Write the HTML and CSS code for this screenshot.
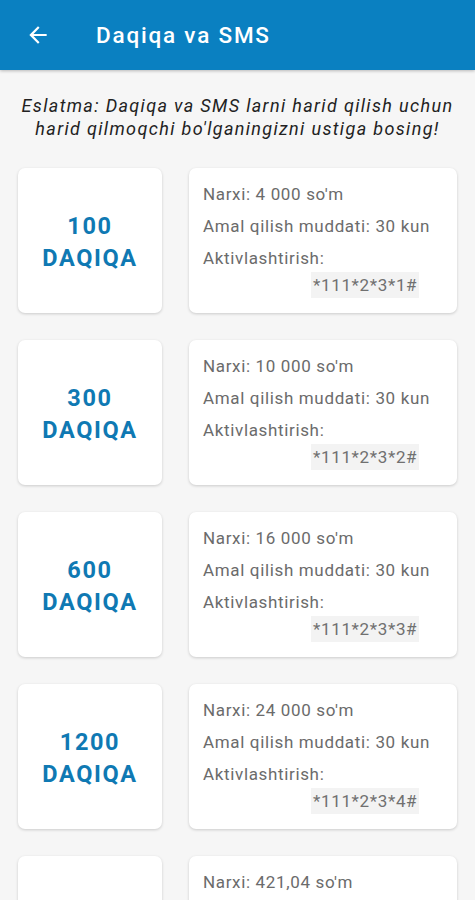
FILE: index.html
```html
<!DOCTYPE html>
<html lang="uz">
<head>
	<meta charset="UTF-8">
	<title>Daqiqa va SMS</title>
	<link rel="stylesheet" href="styles.css">
</head>
<body>
	<div class="topbar">
		<svg class="back" width="24" height="24" viewBox="0 0 24 24"><path d="M20 11H7.83l5.59-5.59L12 4l-8 8 8 8 1.41-1.41L7.83 13H20v-2z" fill="#fff"/></svg>
		<div class="title">Daqiqa va SMS</div>
	</div>

	<p class="note">Eslatma: Daqiqa va SMS larni harid qilish uchun harid qilmoqchi bo'lganingizni ustiga bosing!</p>

	<div class="list">
		<div class="row">
			<div class="card amount">100<br>DAQIQA</div>
			<div class="card info">
				<div class="line">Narxi: 4 000 so'm</div>
				<div class="line">Amal qilish muddati: 30 kun</div>
				<div class="line">Aktivlashtirish:</div>
				<div class="code">*111*2*3*1#</div>
			</div>
		</div>
		<div class="row">
			<div class="card amount">300<br>DAQIQA</div>
			<div class="card info">
				<div class="line">Narxi: 10 000 so'm</div>
				<div class="line">Amal qilish muddati: 30 kun</div>
				<div class="line">Aktivlashtirish:</div>
				<div class="code">*111*2*3*2#</div>
			</div>
		</div>
		<div class="row">
			<div class="card amount">600<br>DAQIQA</div>
			<div class="card info">
				<div class="line">Narxi: 16 000 so'm</div>
				<div class="line">Amal qilish muddati: 30 kun</div>
				<div class="line">Aktivlashtirish:</div>
				<div class="code">*111*2*3*3#</div>
			</div>
		</div>
		<div class="row">
			<div class="card amount">1200<br>DAQIQA</div>
			<div class="card info">
				<div class="line">Narxi: 24 000 so'm</div>
				<div class="line">Amal qilish muddati: 30 kun</div>
				<div class="line">Aktivlashtirish:</div>
				<div class="code">*111*2*3*4#</div>
			</div>
		</div>
		<div class="row">
			<div class="card amount">10<br>SMS</div>
			<div class="card info">
				<div class="line">Narxi: 421,04 so'm</div>
				<div class="line">Amal qilish muddati: 1 kun</div>
				<div class="line">Aktivlashtirish:</div>
				<div class="code">*111*1*3*1#</div>
			</div>
		</div>
	</div>
</body>
</html>
```

FILE: styles.css
```css
*{padding:0; margin:0; box-sizing:border-box;}
body{background:#f6f6f6; font-family:Roboto, "Noto Sans", sans-serif; width:475px; overflow:hidden;}

.topbar{height:70px; background:#0a80c1; display:flex; align-items:center; padding-left:25px; box-shadow:0 1px 3px rgba(0,0,0,.25);}
.topbar .back{width:26px; height:26px;}
.topbar .title{color:#fff; font-size:22.5px; font-weight:500; margin-left:45px; letter-spacing:1.8px;}

.note{font-style:italic; font-size:18px; line-height:23px; color:#222; text-align:center; padding:24px 12px 0; letter-spacing:1.35px;}

.list{padding:28px 18px 0 18px; display:flex; flex-direction:column; gap:27px;}
.row{display:flex; gap:27px;}
.card{background:#fff; border-radius:7px; box-shadow:0 1px 3px rgba(0,0,0,.18); height:145px;}
.amount{width:144px; flex:none; display:flex; align-items:center; justify-content:center; text-align:center; color:#0f79b3; font-weight:bold; font-size:23.5px; line-height:32px; letter-spacing:1.6px; padding-top:2px;}
.info{flex:1; padding:10px 12px 0 14px; color:#6b6b6b; font-size:17px; letter-spacing:.65px; white-space:nowrap;}
.info .line{line-height:32px;}
.code{display:inline-block; margin-left:108px; margin-top:-2px; background:#f3f3f3; padding:0 2px; line-height:26px; color:#707070;}
```
